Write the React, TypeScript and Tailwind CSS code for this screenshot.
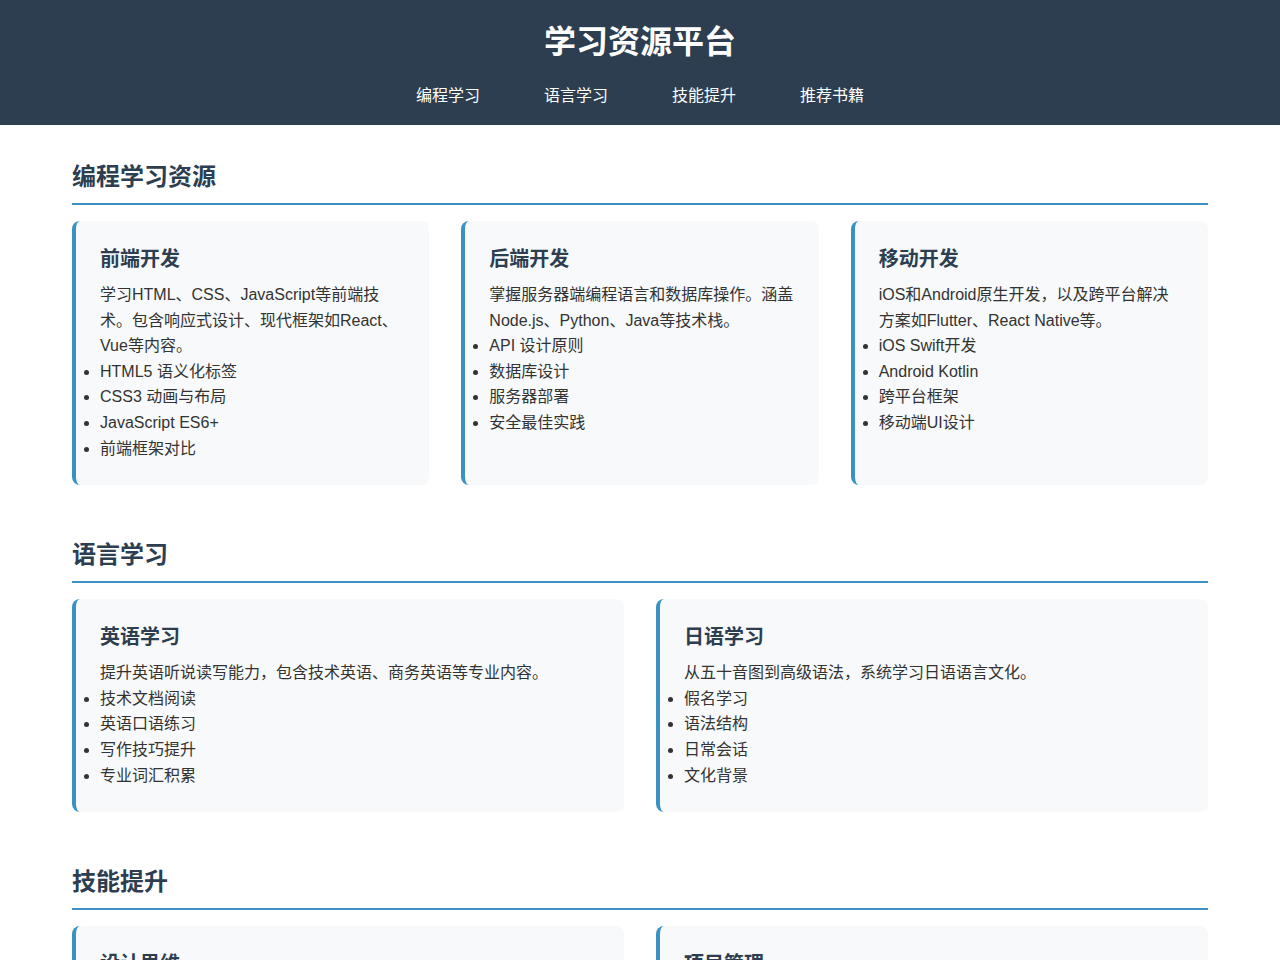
const font = { fontFamily: '"Liberation Sans", "Noto Sans CJK SC", sans-serif' }

type Card = { title: string; desc: string; items: string[] }

const sections: { title: string; cols: string; cards: Card[] }[] = [
  {
    title: '编程学习资源',
    cols: 'grid-cols-3',
    cards: [
      {
        title: '前端开发',
        desc: '学习HTML、CSS、JavaScript等前端技术。包含响应式设计、现代框架如React、Vue等内容。',
        items: ['HTML5 语义化标签', 'CSS3 动画与布局', 'JavaScript ES6+', '前端框架对比'],
      },
      {
        title: '后端开发',
        desc: '掌握服务器端编程语言和数据库操作。涵盖Node.js、Python、Java等技术栈。',
        items: ['API 设计原则', '数据库设计', '服务器部署', '安全最佳实践'],
      },
      {
        title: '移动开发',
        desc: 'iOS和Android原生开发，以及跨平台解决方案如Flutter、React Native等。',
        items: ['iOS Swift开发', 'Android Kotlin', '跨平台框架', '移动端UI设计'],
      },
    ],
  },
  {
    title: '语言学习',
    cols: 'grid-cols-2',
    cards: [
      {
        title: '英语学习',
        desc: '提升英语听说读写能力，包含技术英语、商务英语等专业内容。',
        items: ['技术文档阅读', '英语口语练习', '写作技巧提升', '专业词汇积累'],
      },
      {
        title: '日语学习',
        desc: '从五十音图到高级语法，系统学习日语语言文化。',
        items: ['假名学习', '语法结构', '日常会话', '文化背景'],
      },
    ],
  },
  {
    title: '技能提升',
    cols: 'grid-cols-2',
    cards: [
      {
        title: '设计思维',
        desc: '培养用户体验设计思维，掌握设计工具与方法。',
        items: ['用户研究', '原型设计', '交互设计', '视觉设计'],
      },
      {
        title: '项目管理',
        desc: '学习敏捷开发、团队协作与项目规划方法。',
        items: ['敏捷开发', '需求分析', '进度管理', '团队协作'],
      },
    ],
  },
]

export default function App() {
  return (
    <div className="min-h-screen bg-white" style={font}>
      <header className="flex h-[125px] flex-col items-center bg-[#2c3e50] pt-[18px] text-white">
        <h1 className="text-[32px] font-bold leading-[48px]">学习资源平台</h1>
        <nav className="mt-[18px] flex gap-16 text-base leading-6">
          {['编程学习', '语言学习', '技能提升', '推荐书籍'].map((n) => (
            <a key={n}>{n}</a>
          ))}
        </nav>
      </header>

      <main className="mx-auto max-w-[1136px] pt-[37px]">
        {sections.map((s) => (
          <section key={s.title} className="mb-[55px]">
            <h2 className="mb-4 border-b-2 border-[#3a92c2] pb-[12px] text-2xl font-bold leading-[29px] text-[#2c3e50]">
              {s.title}
            </h2>
            <div className={`grid ${s.cols} gap-8`}>
              {s.cards.map((c) => (
                <div key={c.title} className="rounded-lg border-l-4 border-[#3a92c2] bg-[#f7f9fa] p-6">
                  <h3 className="mb-[11px] mt-[2px] text-xl font-bold leading-6 text-[#2c3e50]">{c.title}</h3>
                  <p className="text-base leading-[25.6px] text-[#333]">{c.desc}</p>
                  <ul className="list-disc pl-0 text-base leading-[25.6px] text-[#333]">
                    {c.items.map((i) => (
                      <li key={i}>{i}</li>
                    ))}
                  </ul>
                </div>
              ))}
            </div>
          </section>
        ))}
      </main>
    </div>
  )
}
